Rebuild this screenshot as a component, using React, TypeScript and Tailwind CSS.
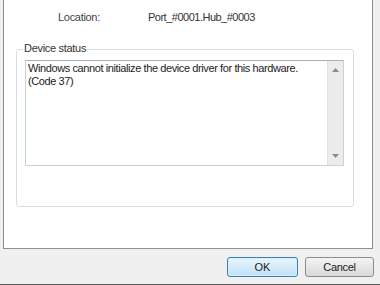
import React from "react";

function ScrollArrow({ up }: { up?: boolean }) {
  return (
    <svg width="7" height="4" viewBox="0 0 7 4">
      <path d={up ? "M0 4 L3.5 0 L7 4 Z" : "M0 0 L3.5 4 L7 0 Z"} fill="#8a8a8a" />
    </svg>
  );
}

function App() {
  return (
    <div
      className="w-[380px] h-[285px] bg-[#f0f0f0] flex flex-col border-b border-[#5a5a5a] overflow-hidden text-[11px] text-[#333]"
      style={{ fontFamily: '"Liberation Sans", Arial, sans-serif' }}
    >
      {/* properties panel */}
      <div className="ml-[3px] w-[370px] h-[249px] bg-white border-x border-b border-[#8e8f8f] flex flex-col">
        <div className="mt-[11px] flex leading-[13px] h-[13px]">
          <span className="ml-[54px] w-[90px] text-[#444] tracking-[-0.3px]">Location:</span>
          <span className="tracking-[-0.5px]">Port_#0001.Hub_#0003</span>
        </div>

        <div className="relative ml-[12px] mt-[25px] w-[338px] h-[158px] border border-[#d5dfe5] rounded-[3px]">
          <span className="absolute -top-[8px] left-[6px] bg-white px-[1px] leading-[13px] tracking-[-0.3px]">
            Device status
          </span>
          <div className="ml-[8px] mt-[10px] w-[319px] h-[106px] border border-[#c7d3dc] border-t-[#abadb3] flex">
            <div className="flex-1 pl-[2px] pt-[1px] leading-[13px] text-[#222] tracking-[-0.4px]">
              Windows cannot initialize the device driver for this hardware.
              <br />
              (Code 37)
            </div>
            <div className="w-[16px] bg-[#ececec] border-l border-[#e2e2e2] flex flex-col items-center justify-between py-[7px]">
              <ScrollArrow up />
              <ScrollArrow />
            </div>
          </div>
        </div>
      </div>

      {/* buttons */}
      <div className="flex justify-end gap-[7px] mt-[8px] pr-[6px]">
        <button className="w-[71px] h-[20px] rounded-[3px] border border-[#3c7fb1] bg-gradient-to-b from-[#eaf6fd] to-[#bfe1f7] text-[11px] text-[#222] leading-none shadow-[inset_0_0_0_1px_#d8eefb]">
          OK
        </button>
        <button className="w-[69px] h-[20px] rounded-[3px] border border-[#8d8d8d] bg-gradient-to-b from-[#f4f4f4] to-[#d9d9d9] text-[11px] text-[#222] leading-none tracking-[-0.3px]">
          Cancel
        </button>
      </div>
    </div>
  );
}

export default App;
